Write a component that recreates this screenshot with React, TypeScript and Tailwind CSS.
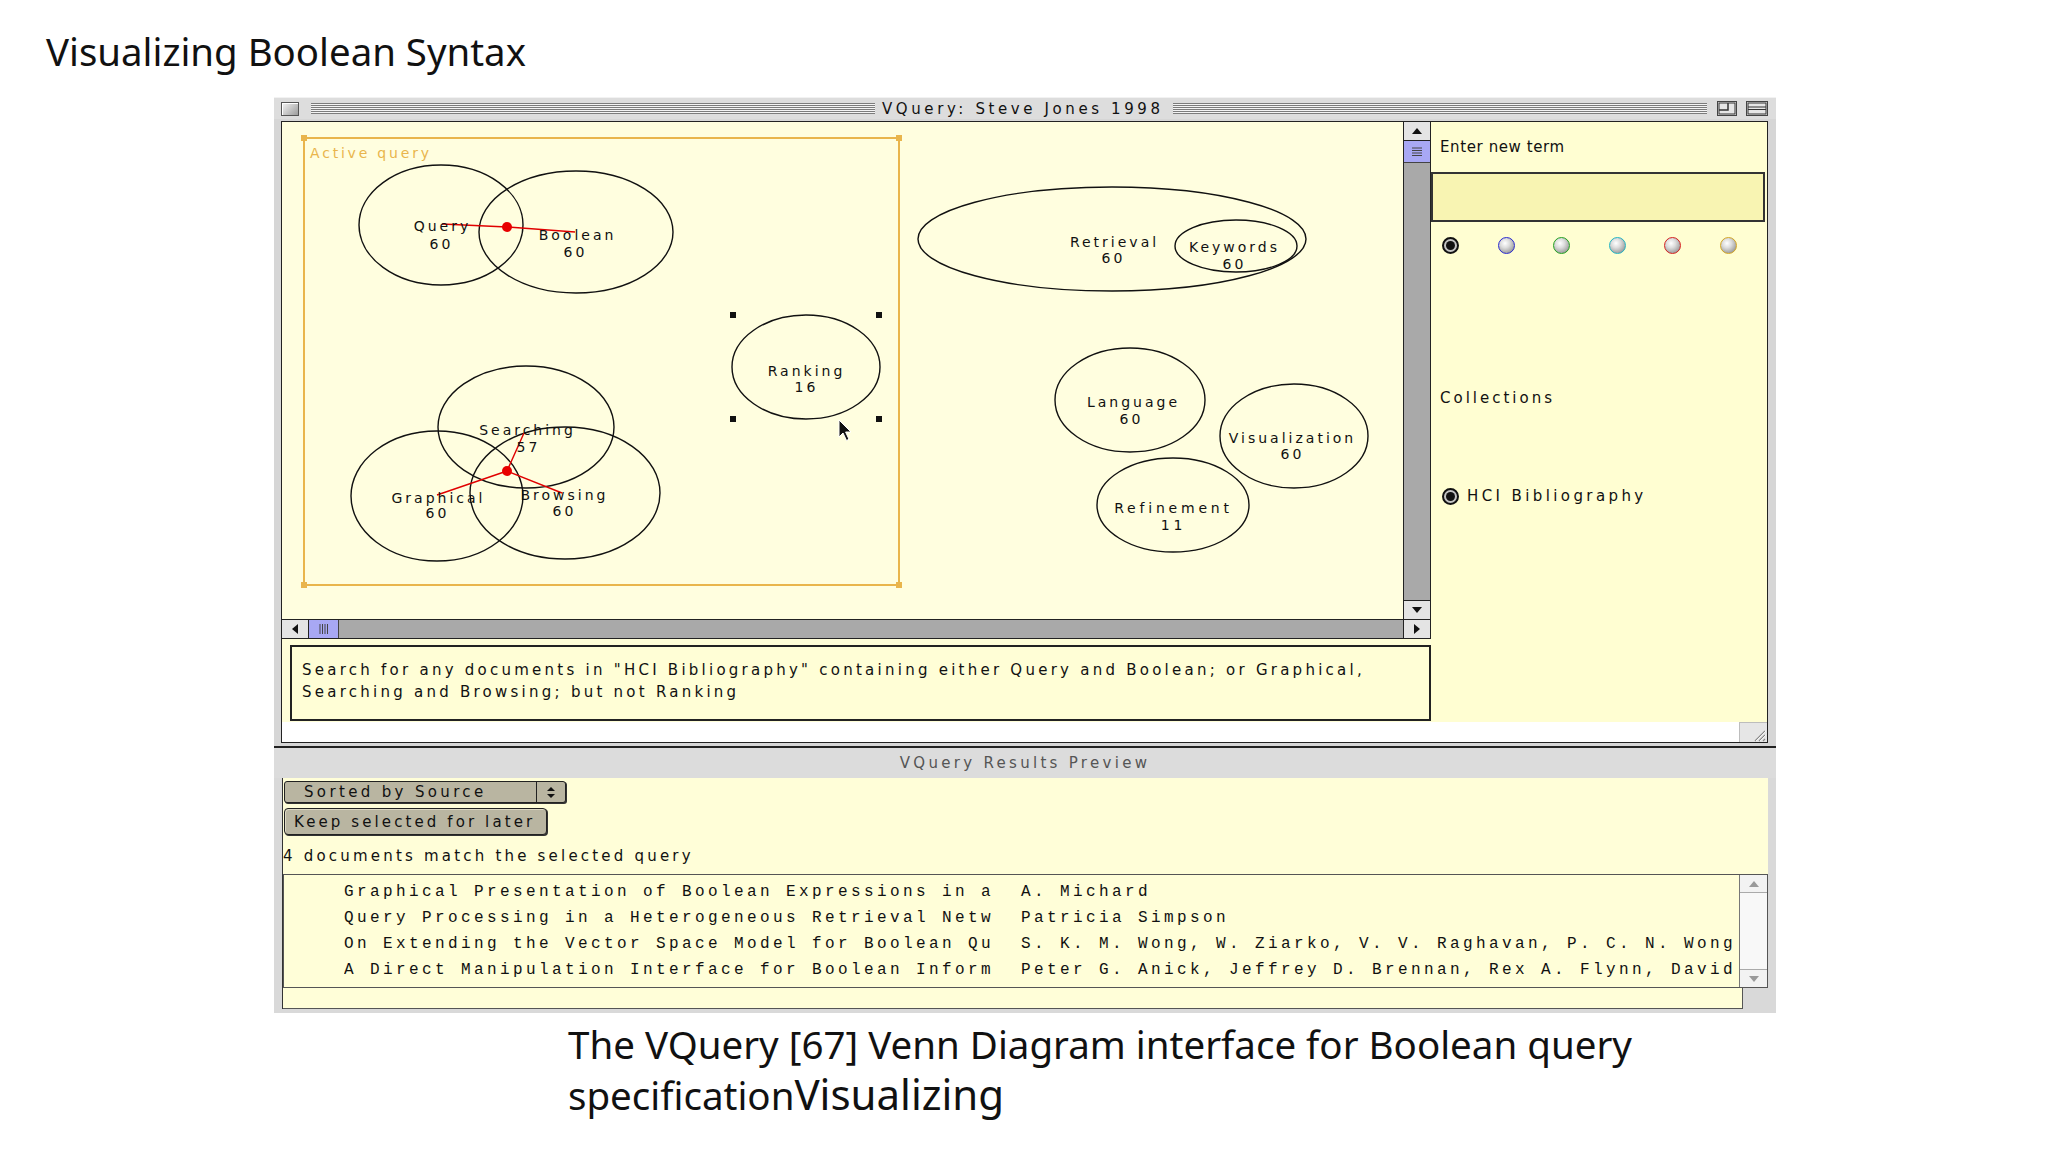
import React from "react";

const ui = "font-['DejaVu_Sans',sans-serif]";

function Stripes({ className = "" }: { className?: string }) {
  return (
    <div
      className={`h-[11px] bg-[repeating-linear-gradient(to_bottom,#7c7c7c_0px,#7c7c7c_1px,#f4f4f4_1px,#f4f4f4_2px)] ${className}`}
    />
  );
}

function TitleBar() {
  return (
    <div className="h-[22px] bg-[#dddddd] border-t border-[#f2f2f2] flex items-center">
      <div className="ml-[7px] w-[18px] h-[14px] border border-[#555] bg-[linear-gradient(135deg,#f4f4f4,#9c9c9c)] shadow-[inset_1px_1px_0_#fff]" />
      <Stripes className="ml-[12px] w-[564px]" />
      <div className="ml-[7px] text-[15px] leading-[20px] tracking-[3.6px] text-[#111] whitespace-nowrap w-[284px]">
        VQuery: Steve Jones 1998
      </div>
      <Stripes className="ml-[7px] flex-1" />
      <div className="ml-[10px] w-[20px] h-[15px] bg-[#e6e6e6] border border-[#444] flex">
        <svg width="18" height="13" viewBox="0 0 18 13">
          <rect x="1" y="1" width="16" height="11" fill="none" stroke="#333" strokeWidth="1" />
          <path d="M1 8 H10 V1" fill="none" stroke="#333" strokeWidth="1.5" />
        </svg>
      </div>
      <div className="ml-[9px] mr-[8px] w-[22px] h-[15px] bg-[#e6e6e6] border border-[#444] flex">
        <svg width="20" height="13" viewBox="0 0 20 13">
          <rect x="1" y="1" width="18" height="11" fill="none" stroke="#333" strokeWidth="1" />
          <path d="M1 5 H19 M1 7.5 H19" stroke="#333" strokeWidth="1.2" />
        </svg>
      </div>
    </div>
  );
}

type Node = { cx: number; cy: number; rx: number; ry: number; name: string; n: string; lx: number; ly: number; nx: number; ny: number };

const nodes: Node[] = [
  { cx: 159, cy: 102, rx: 82, ry: 60, name: "Query", n: "60", lx: 159, ly: 108, nx: 158, ny: 126 },
  { cx: 294, cy: 109, rx: 97, ry: 61, name: "Boolean", n: "60", lx: 294, ly: 117, nx: 292, ny: 134 },
  { cx: 524, cy: 244, rx: 74, ry: 52, name: "Ranking", n: "16", lx: 523, ly: 253, nx: 523, ny: 269 },
  { cx: 244, cy: 304, rx: 88, ry: 61, name: "Searching", n: "57", lx: 244, ly: 312, nx: 245, ny: 329 },
  { cx: 155, cy: 373, rx: 86, ry: 65, name: "Graphical", n: "60", lx: 155, ly: 380, nx: 154, ny: 395 },
  { cx: 283, cy: 370, rx: 95, ry: 66, name: "Browsing", n: "60", lx: 281, ly: 377, nx: 281, ny: 393 },
  { cx: 830, cy: 116, rx: 194, ry: 52, name: "Retrieval", n: "60", lx: 831, ly: 124, nx: 830, ny: 140 },
  { cx: 954, cy: 123, rx: 61, ry: 26, name: "Keywords", n: "60", lx: 951, ly: 129, nx: 951, ny: 146 },
  { cx: 848, cy: 277, rx: 75, ry: 52, name: "Language", n: "60", lx: 850, ly: 284, nx: 848, ny: 301 },
  { cx: 1012, cy: 313, rx: 74, ry: 52, name: "Visualization", n: "60", lx: 1009, ly: 320, nx: 1009, ny: 336 },
  { cx: 891, cy: 382, rx: 76, ry: 47, name: "Refinement", n: "11", lx: 890, ly: 390, nx: 890, ny: 407 },
];

function CanvasSvg() {
  const ff = "'DejaVu Sans', sans-serif";
  const orange = "#e9b54c";
  return (
    <svg width="1121" height="497" viewBox="0 0 1121 497" className="block">
      <g transform="translate(0 1)">
        <rect x="22" y="15" width="595" height="447" fill="none" stroke={orange} strokeWidth="2" />
        {[
          [22, 15],
          [617, 15],
          [22, 462],
          [617, 462],
        ].map(([x, y], i) => (
          <rect key={i} x={x - 3} y={y - 3} width="6" height="6" fill={orange} />
        ))}
        <text x="28" y="35" fontFamily={ff} fontSize="14" letterSpacing="2.8" fill={orange}>
          Active query
        </text>
        {nodes.map((n) => (
          <ellipse key={n.name} cx={n.cx} cy={n.cy} rx={n.rx} ry={n.ry} fill="none" stroke="#111" strokeWidth="1.4" />
        ))}
        <g stroke="#e00000" strokeWidth="1.4" fill="none">
          <path d="M160 101 L225 104 L293 109" />
          <path d="M225 348 L242 310 M225 348 L155 372 M225 348 L280 370" />
        </g>
        <circle cx="225" cy="104" r="5" fill="#e80000" />
        <circle cx="225" cy="348" r="5" fill="#e80000" />
        {nodes.map((n) => (
          <g key={n.name + "t"} fontFamily={ff} fontSize="14" letterSpacing={n.name === "Refinement" ? 3.8 : 3} fill="#111" textAnchor="middle">
            <text x={n.lx + 1.5} y={n.ly}>
              {n.name}
            </text>
            <text x={n.nx + 1.5} y={n.ny}>
              {n.n}
            </text>
          </g>
        ))}
        {[
          [451, 192],
          [597, 192],
          [451, 296],
          [597, 296],
        ].map(([x, y], i) => (
          <rect key={"h" + i} x={x - 3} y={y - 3} width="6" height="6" fill="#111" />
        ))}
        <path
          d="M557 297 L557 314 L561 310 L564.5 317.5 L567 316.3 L563.6 309 L569 309 Z"
          fill="#111"
          stroke="#fff"
          strokeWidth="1"
        />
      </g>
    </svg>
  );
}

function VScroll() {
  return (
    <div className="w-[28px] border-l border-r border-[#222] bg-[#a9a9a9] flex flex-col">
      <div className="h-[19px] bg-[#e4e4e4] border-b border-[#222] flex items-center justify-center">
        <svg width="10" height="6" viewBox="0 0 10 6">
          <path d="M0 6 L5 0 L10 6 Z" fill="#111" />
        </svg>
      </div>
      <div className="h-[22px] bg-[#a8a8f4] border-b border-[#444] flex items-center justify-center">
        <svg width="12" height="12" viewBox="0 0 12 12">
          <path d="M1 2 H11 M1 4.5 H11 M1 7 H11 M1 9.5 H11" stroke="#444" strokeWidth="1" />
        </svg>
      </div>
      <div className="flex-1" />
      <div className="h-[19px] bg-[#e4e4e4] border-t border-[#222] flex items-center justify-center">
        <svg width="10" height="6" viewBox="0 0 10 6">
          <path d="M0 0 L5 6 L10 0 Z" fill="#111" />
        </svg>
      </div>
    </div>
  );
}

function HScroll() {
  return (
    <div className="h-[20px] border-t border-b border-[#222] bg-[#a9a9a9] flex">
      <div className="w-[27px] bg-[#e4e4e4] border-r border-[#222] flex items-center justify-center">
        <svg width="6" height="10" viewBox="0 0 6 10">
          <path d="M6 0 L0 5 L6 10 Z" fill="#111" />
        </svg>
      </div>
      <div className="w-[30px] bg-[#a8a8f4] border-r border-[#444] flex items-center justify-center">
        <svg width="12" height="12" viewBox="0 0 12 12">
          <path d="M2 1 V11 M4.5 1 V11 M7 1 V11 M9.5 1 V11" stroke="#444" strokeWidth="1" />
        </svg>
      </div>
      <div className="flex-1" />
      <div className="w-[28px] bg-[#e4e4e4] border-l border-r border-[#222] flex items-center justify-center">
        <svg width="6" height="10" viewBox="0 0 6 10">
          <path d="M0 0 L6 5 L0 10 Z" fill="#111" />
        </svg>
      </div>
    </div>
  );
}

function Radio({ ring }: { ring: string }) {
  return (
    <span
      className={`block w-[17px] h-[17px] rounded-full border-[1.5px] ${ring} bg-[radial-gradient(circle_at_40%_35%,#ffffff_0%,#dcdcdc_35%,#a0a0a0_75%,#787878_100%)]`}
    />
  );
}

function RadioOn() {
  return (
    <span className="flex w-[17px] h-[17px] rounded-full border-2 border-[#111] bg-[#c4c4c4] items-center justify-center">
      <span className="block w-[9px] h-[9px] rounded-full bg-[#111]" />
    </span>
  );
}

function RightPanel() {
  return (
    <div className="flex-1 bg-[#fffed2] flex flex-col text-[15px] leading-[20px] text-[#111]">
      <div className="mt-[15px] ml-[9px] tracking-[0.6px]">Enter new term</div>
      <div className="mt-[15px] w-[334px] h-[50px] border-2 border-[#333] bg-[#f8f4b2]" />
      <div className="mt-[15px] ml-[11px] flex items-center gap-[38.6px]">
        <RadioOn />
        <Radio ring="border-[#2a2ad0]" />
        <Radio ring="border-[#22a022]" />
        <Radio ring="border-[#22b4c4]" />
        <Radio ring="border-[#d42020]" />
        <Radio ring="border-[#d2a424]" />
      </div>
      <div className="mt-[134px] ml-[9px] tracking-[3px]">Collections</div>
      <div className="mt-[78px] ml-[11px] flex items-center h-[20px]">
        <RadioOn />
        <span className="ml-[8px] tracking-[3.4px]">HCI Bibliography</span>
      </div>
    </div>
  );
}

function Grip() {
  return (
    <div className="w-[28px] h-[20px] bg-[#e6e6e6] border-l border-t border-[#bdbdbd] flex items-end justify-end">
      <svg width="16" height="14" viewBox="0 0 16 14">
        <path d="M4 13 L14 3 M8 13 L14 7 M12 13 L14 11" stroke="#888" strokeWidth="1.2" />
        <path d="M5 13 L15 3 M9 13 L15 7" stroke="#fff" strokeWidth="0.8" />
      </svg>
    </div>
  );
}

const titles = [
  "Graphical Presentation of Boolean Expressions in a",
  "Query Processing in a Heterogeneous Retrieval Netw",
  "On Extending the Vector Space Model for Boolean Qu",
  "A Direct Manipulation Interface for Boolean Inform",
];
const authors = [
  "A. Michard",
  "Patricia Simpson",
  "S. K. M. Wong, W. Ziarko, V. V. Raghavan, P. C. N. Wong",
  "Peter G. Anick, Jeffrey D. Brennan, Rex A. Flynn, David",
];

function List() {
  return (
    <div className="h-[114px] flex border border-[#555] bg-[#fffed8]">
      <div className="flex-1 pl-[60px] pt-[4px] font-['Liberation_Mono',monospace] text-[16px] leading-[26px] tracking-[3.4px] text-[#111] whitespace-nowrap overflow-hidden">
        {titles.map((t, i) => (
          <div key={i} className="flex">
            <span className="w-[677px] shrink-0 overflow-hidden">{t}</span>
            <span>{authors[i]}</span>
          </div>
        ))}
      </div>
      <div className="w-[28px] border-l border-[#777] bg-[#eeeeee] flex flex-col">
        <div className="h-[18px] bg-[#f2f2f2] border-b border-[#aaa] flex items-center justify-center">
          <svg width="10" height="6" viewBox="0 0 10 6">
            <path d="M0 6 L5 0 L10 6 Z" fill="#999" />
          </svg>
        </div>
        <div className="flex-1 bg-[#f8f8f8]" />
        <div className="h-[18px] bg-[#f2f2f2] border-t border-[#aaa] flex items-center justify-center">
          <svg width="10" height="6" viewBox="0 0 10 6">
            <path d="M0 0 L5 6 L10 0 Z" fill="#999" />
          </svg>
        </div>
      </div>
    </div>
  );
}

function Results() {
  return (
    <div className="bg-[#d9d9d9] pl-[8px] pr-[8px] pb-[4px]">
      <div className="flex flex-col border-l border-[#333]">
        <div className="bg-[#fffed8] flex flex-col text-[15px] text-[#111]">
          <div className="h-[25px] pt-[3px] pl-[1px]">
            <div className="w-[282px] h-[22px] rounded-[3px] border border-[#222] bg-[#b9b5a1] shadow-[1px_1px_0_#333] flex items-center">
              <span className="pl-[19px] tracking-[3.35px] leading-[20px] flex-1">Sorted by Source</span>
              <span className="w-[29px] h-full border-l border-[#222] flex items-center justify-center">
                <svg width="10" height="13" viewBox="0 0 10 13">
                  <path d="M1 5 L5 1 L9 5 Z M1 8 L5 12 L9 8 Z" fill="#111" />
                </svg>
              </span>
            </div>
          </div>
          <div className="h-[33px] pt-[5px] pl-[1px]">
            <div className="w-[263px] h-[27px] rounded-[4px] border border-[#222] bg-[#b9b5a1] shadow-[1px_1px_0_#333,inset_1px_1px_0_#dcd8c4] flex items-center pl-[9px] tracking-[3.1px] leading-[20px]">
              Keep selected for later
            </div>
          </div>
          <div className="h-[38px] pt-[10px] leading-[20px] tracking-[3.2px]">4 documents match the selected query</div>
        </div>
        <List />
        <div className="h-[21px] flex">
          <div className="flex-1 bg-[#fffed8] border-r border-b border-[#555]" />
          <div className="w-[25px]" />
        </div>
      </div>
    </div>
  );
}

function Window() {
  return (
    <div className={`ml-[274px] w-[1502px] flex flex-col ${ui}`}>
      <TitleBar />
      <div className="bg-[#d6d6d6] pl-[7px] pr-[8px] pt-[2px] pb-[3px]">
        <div className="border border-[#222] flex flex-col bg-white">
          <div className="flex h-[600px]">
            <div className="w-[1149px] flex flex-col">
              <div className="flex h-[497px]">
                <div className="w-[1121px] bg-[#fffedf]">
                  <CanvasSvg />
                </div>
                <VScroll />
              </div>
              <HScroll />
              <div className="flex-1 bg-[#fffed8] pt-[6px] pl-[8px]">
                <div className="h-[76px] border-2 border-[#222] bg-[#fffed6] pl-[10px] pt-[12px] text-[15px] leading-[22px] tracking-[3.25px] text-[#111] whitespace-nowrap">
                  Search for any documents in "HCI Bibliography" containing either Query and Boolean; or Graphical,
                  <br />
                  Searching and Browsing; but not Ranking
                </div>
              </div>
            </div>
            <RightPanel />
          </div>
          <div className="h-[20px] bg-white flex justify-end">
            <Grip />
          </div>
        </div>
      </div>
      <div className="h-[2px] bg-[#222]" />
      <div className="h-[30px] bg-[#dcdcdc] flex items-center justify-center text-[15px] leading-[20px] tracking-[3.3px] text-[#555]">
        VQuery Results Preview
      </div>
      <Results />
    </div>
  );
}

export default function App() {
  return (
    <div className="w-[2048px] h-[1152px] bg-white overflow-hidden flex flex-col">
      <div className="h-[97px] pl-[46px] pt-[24px]">
        <h1 className="font-['Noto_Sans',sans-serif] text-[38.4px] leading-[54px] text-[#111] whitespace-nowrap">
          Visualizing Boolean Syntax
        </h1>
      </div>
      <Window />
      <div className="pl-[568px] pt-[6px] font-['Noto_Sans',sans-serif] text-[#111]">
        <p className="text-[38.5px] leading-[50px] whitespace-nowrap">
          The VQuery [67] Venn Diagram interface for Boolean query
        </p>
        <p className="text-[38.5px] leading-[50px] whitespace-nowrap">
          specification<span className="text-[42px]">Visualizing</span>
        </p>
      </div>
    </div>
  );
}
